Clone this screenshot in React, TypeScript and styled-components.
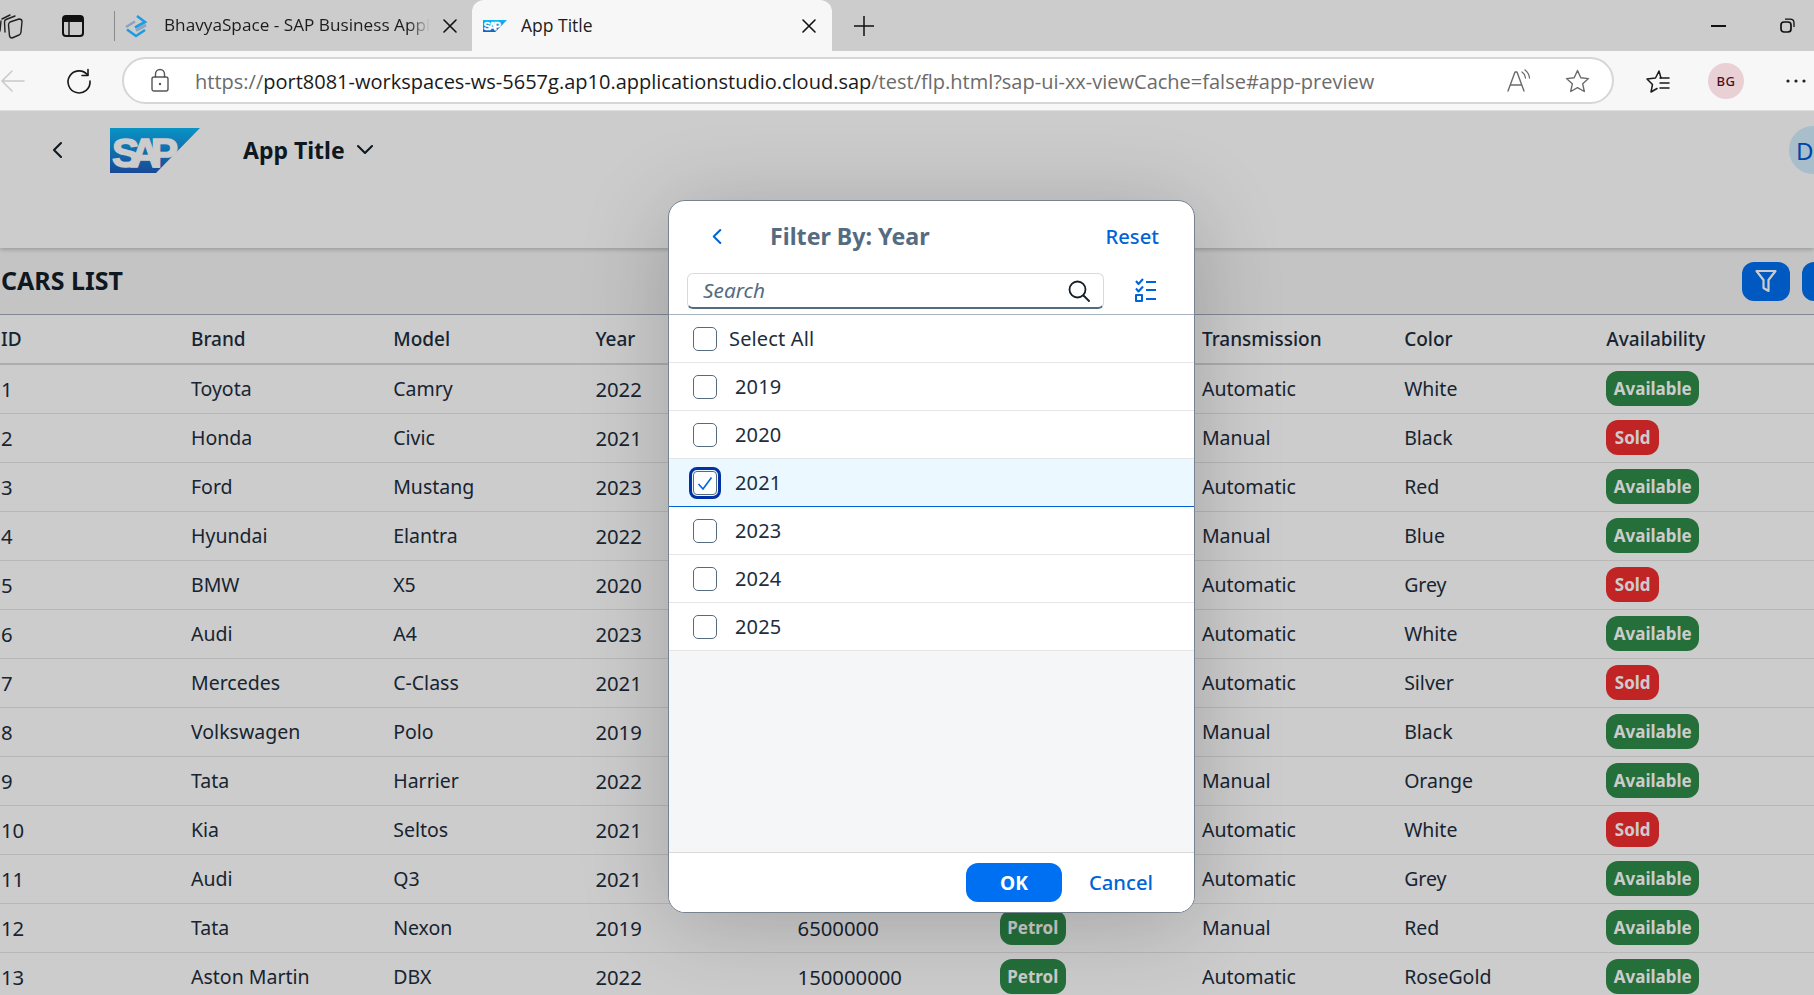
import React from "react";
import styled, { createGlobalStyle } from "styled-components";

const Global = createGlobalStyle`
  html, body { margin: 0; padding: 0; height: 100%; overflow: hidden; background: #fff; }
  body { font-family: "Noto Sans", "Open Sans", sans-serif; color: #1d2d3e; }
  #root { width: 1814px; height: 995px; overflow: hidden; }
  * { box-sizing: border-box; }
`;

const Strip = styled.div`
  height: 51px; background: #cccccc; display: flex; align-items: center; padding-right: 19px;
`;
const Slot = styled.span<{ $w: number; $ml?: number }>`
  display: flex; align-items: center; justify-content: center; flex: none;
  width: ${p => p.$w}px; margin-left: ${p => p.$ml ?? 0}px;
  svg { display: block; overflow: visible; }
`;
const Sep = styled.span`
  width: 1px; height: 30px; background: #8a8a8a; margin-left: 30px; flex: none;
`;
const TabLabel = styled.span`
  font-family: "Open Sans", sans-serif; font-size: 17.5px; line-height: 24px; margin-bottom: 2px; color: #1c1c1c; white-space: nowrap; overflow: hidden;
`;
const BackTabLabel = styled(TabLabel)`
  width: 266px; margin-left: 16px; flex: none; font-size: 17.2px;
  -webkit-mask-image: linear-gradient(90deg, #000 92%, transparent);
  mask-image: linear-gradient(90deg, #000 92%, transparent);
`;
const ActiveTab = styled.div`
  width: 360px; height: 51px; margin-left: 15px; flex: none; background: #f7f7f7;
  border-radius: 12px 12px 0 0; display: flex; align-items: center; padding: 0 16px 0 11px;
`;
const ActiveLabel = styled(TabLabel)`
  margin-left: 14px; flex: 1;
`;
const Spacer = styled.span`
  flex: 1;
`;

const AddressBar = styled.div`
  height: 60px; background: #f7f7f7; border-bottom: 1px solid #dedede; display: flex; align-items: center;
`;
const UrlPill = styled.div`
  width: 1492px; height: 47px; margin-left: 31px; flex: none; background: #fff; border: 2px solid #d6d6d6;
  border-radius: 24px; display: flex; align-items: center; padding: 0 22px 0 27px;
`;
const UrlText = styled.div`
  margin: 2px 0 0 26px; flex: 1; font-family: "Open Sans", sans-serif; font-size: 20px; white-space: nowrap; color: #6b6b6b; overflow: hidden;
`;
const UrlHost = styled.span`
  color: #1a1a1a;
`;
const Profile = styled.span`
  width: 36px; height: 36px; margin-left: 39px; flex: none; border-radius: 50%; background: #e8d0d4; color: #4a0d1c;
  display: flex; align-items: center; justify-content: center; font-size: 13px; font-weight: 500; letter-spacing: .5px;
`;

const Page = styled.div`
  position: relative; height: 884px; overflow: hidden; background: #fff;
`;
const ShellBar = styled.header`
  height: 137px; background: #fff; position: relative; box-shadow: 0 2px 4px rgba(0,0,0,.2);
  display: flex; align-items: flex-start; padding-top: 15px;
`;
const ShellRow = styled.div`
  height: 48px; width: 100%; display: flex; align-items: center; color: #1d2d3e;
`;
const AppTitle = styled.h1`
  margin: 0 0 0 43px; font-size: 23px; font-weight: 700; line-height: 1; color: #131e29; white-space: nowrap; flex: none; width: 104px;
`;
const Avatar = styled.span`
  position: absolute; left: 1789px; top: 15px; width: 48px; height: 48px; border-radius: 50%; background: #d2eefe; color: #0057d2;
  display: flex; align-items: center; padding-left: 7px; font-size: 24px;
`;
const Toolbar = styled.div`
  height: 67px; background: #f5f6f7; border-bottom: 1px solid #a0acb8; display: flex; align-items: center; padding-left: 1px;
`;
const TableTitle = styled.h2`
  margin: 0 0 2px; font-size: 25px; font-weight: 700; color: #131e29; flex: none;
`;
const ToolButton = styled.button<{ $ml?: number; $cut?: boolean }>`
  width: 48px; height: 39px; margin-left: ${p => p.$ml ?? 0}px; margin-right: ${p => (p.$cut ? -36 : 0)}px; flex: none; border: 0; padding: 0; border-radius: 12px; background: #0070f2;
  display: flex; align-items: center; justify-content: center;
`;
const Row = styled.div<{ $head?: boolean }>`
  display: grid; grid-template-columns: 190px repeat(8, 202.2px) 1fr; padding-left: 1px; align-items: center; background: #fff;
  height: ${p => (p.$head ? 49.5 : 49)}px;
  font-size: ${p => (p.$head ? 19 : 19.5)}px; color: #1d2d3e; white-space: nowrap;
  font-weight: ${p => (p.$head ? 500 : 400)};
  border-bottom: ${p => (p.$head ? "2px solid #d9d9d9" : "1px solid #e5e5e5")};
`;
const Cell = styled.div``;
const NumCell = styled.div`
  font-size: 20.3px;
`;
const Pill = styled.span<{ $tone: "good" | "bad" }>`
  display: inline-flex; align-items: center; height: 35px; padding: 0 ${p => (p.$tone === "good" ? 7.5 : 8.5)}px; border-radius: 12px; color: #fff;
  font-size: 17px; font-weight: 700; background: ${p => (p.$tone === "good" ? "#2e8b49" : "#f22e2e")};
`;

const Overlay = styled.div`
  position: absolute; inset: 0; background: rgba(0,0,0,.2); padding: 89px 0 0 668px;
`;
const Dialog = styled.section`
  width: 527px; height: 713px; background: #fff; border: 1px solid #77838f; border-radius: 17px; overflow: hidden;
  box-shadow: 0 10px 90px rgba(0,0,0,.2); display: flex; flex-direction: column;
`;
const DialogHead = styled.div`
  height: 66px; flex: none; display: flex; align-items: center; padding: 4px 35px 0 42px;
`;
const DialogTitle = styled.h3`
  margin: 0 0 0 47px; font-size: 23.2px; font-weight: 700; color: #556b82; flex: 1; white-space: nowrap;
`;
const LinkButton = styled.button`
  border: 0; background: none; padding: 0; font: inherit; font-size: 20.2px; font-weight: 500; color: #0064d9;
`;
const SubHead = styled.div`
  height: 48px; flex: none; display: flex; align-items: flex-start; padding: 6px 0 0 18px; border-bottom: 1px solid #a8b2bd;
`;
const SearchBox = styled.div`
  width: 417px; height: 36px; flex: none; background: #fff; border: 1px solid #d4dae0; border-bottom: 2px solid #556b82; border-radius: 6px;
  display: flex; align-items: center; justify-content: space-between; padding: 0 13px 0 15px;
`;
const Placeholder = styled.span`
  font-size: 20.8px; line-height: 28px; margin-bottom: 2px; font-style: italic; color: #556b82;
`;
const ListArea = styled.div`
  flex: 1; background: #f5f6f7; display: flex; flex-direction: column;
`;
const Option = styled.div<{ $selected?: boolean; $gap: number; $h: number }>`
  height: ${p => p.$h}px; flex: none; display: flex; align-items: center; padding-left: 24px; gap: ${p => p.$gap}px;
  font-size: 20px; letter-spacing: .15px; color: #1d2d3e;
  background: ${p => (p.$selected ? "#ebf8ff" : "#fff")};
  border-bottom: 1px solid ${p => (p.$selected ? "#0064d9" : "#e5e5e5")};
`;
const Check = styled.span<{ $focus?: boolean }>`
  width: 24px; height: 24px; flex: none; margin-top: 1px; background: #fff; border: 1px solid #556b82; border-radius: 5px;
  display: flex; align-items: center; justify-content: center;
  ${p => p.$focus ? "outline: 3px solid #0032a5; outline-offset: 1.5px; border-radius: 4px;" : ""}
`;
const DialogFoot = styled.div`
  height: 60px; flex: none; background: #fff; border-top: 1px solid #d9d9d9; display: flex; align-items: center; padding: 0 40px 0 297px;
`;
const OkButton = styled.button`
  width: 96px; height: 39px; flex: none; border: 0; padding: 0; border-radius: 12px; background: #0070f2; color: #fff;
  font: inherit; font-size: 19.2px; font-weight: 700;
`;
const CancelButton = styled(LinkButton)`
  margin: 0 0 2px 27px;
`;

const line = { fill: "none", stroke: "currentColor", strokeLinecap: "round", strokeLinejoin: "round" } as const;

const SapMark = ({ w, h }: { w: number; h: number }) => (
  <svg width={w} height={h} viewBox="0 0 90 45">
    <defs>
      <linearGradient id={`sapg${w}`} x1="0" y1="0" x2="0" y2="1">
        <stop offset="0" stopColor="#0cb8f7" />
        <stop offset="1" stopColor="#1f5cbd" />
      </linearGradient>
    </defs>
    <polygon points="0,0 90,0 46,45 0,45" fill={`url(#sapg${w})`} />
    <text x="2" y="39" fontFamily="Liberation Sans, sans-serif" fontWeight="700" fontSize="41" fill="#fff" stroke="#fff" strokeWidth="1.5" textLength="66" lengthAdjust="spacing">SAP</text>
  </svg>
);

const Chevron = ({ dir, color, size = 16 }: { dir: "l" | "d"; color: string; size?: number }) => (
  <svg width={size} height={size} viewBox="0 0 16 16" style={{ color }}>
    {dir === "l" ? <path d="M11 1 L4 8 L11 15" {...line} strokeWidth="2.1" /> : <path d="M1 4 L8 11 L15 4" {...line} strokeWidth="2.1" />}
  </svg>
);

const cars = [
  ["1", "Toyota", "Camry", "2022", "2500000", "Petrol", "Automatic", "White", "Available"],
  ["2", "Honda", "Civic", "2021", "2100000", "Petrol", "Manual", "Black", "Sold"],
  ["3", "Ford", "Mustang", "2023", "7500000", "Petrol", "Automatic", "Red", "Available"],
  ["4", "Hyundai", "Elantra", "2022", "2000000", "Petrol", "Manual", "Blue", "Available"],
  ["5", "BMW", "X5", "2020", "9500000", "Diesel", "Automatic", "Grey", "Sold"],
  ["6", "Audi", "A4", "2023", "4500000", "Petrol", "Automatic", "White", "Available"],
  ["7", "Mercedes", "C-Class", "2021", "5500000", "Petrol", "Automatic", "Silver", "Sold"],
  ["8", "Volkswagen", "Polo", "2019", "900000", "Petrol", "Manual", "Black", "Available"],
  ["9", "Tata", "Harrier", "2022", "2200000", "Diesel", "Manual", "Orange", "Available"],
  ["10", "Kia", "Seltos", "2021", "1800000", "Petrol", "Automatic", "White", "Sold"],
  ["11", "Audi", "Q3", "2021", "4200000", "Petrol", "Automatic", "Grey", "Available"],
  ["12", "Tata", "Nexon", "2019", "6500000", "Petrol", "Manual", "Red", "Available"],
  ["13", "Aston Martin", "DBX", "2022", "150000000", "Petrol", "Automatic", "RoseGold", "Available"],
];
const heads = ["ID", "Brand", "Model", "Year", "Price", "Fuel", "Transmission", "Color", "Availability"];

export default function App() {
  return (
    <>
      <Global />
      <Strip>
        <Slot $w={22}>
          <svg width="22" height="24" viewBox="0 0 22 24" style={{ color: "#222" }}>
            <path d="M10 8 L19 5 Q22 5 22 7.5 L21 18 Q21 20 19 21 L12 24 Q10 24 9.5 22 L8.5 11 Q8.5 9 10 8Z" {...line} strokeWidth="1.4" />
            <path d="M5 18 L4.5 8 Q4.5 6 6 5.5 L15 2" {...line} strokeWidth="1.4" />
            <path d="M0 17 L1 7 M2 5 L10 1" {...line} strokeWidth="1.4" />
          </svg>
        </Slot>
        <Slot $w={22} $ml={40}>
          <svg width="22" height="22" viewBox="0 0 22 22">
            <path d="M4 1 H18 Q21 1 21 4 V7 H1 V4 Q1 1 4 1Z" fill="#111" />
            <rect x="1" y="1" width="20" height="20" rx="3" fill="none" stroke="#111" strokeWidth="2" />
            <path d="M7 7 V21" stroke="#111" strokeWidth="1.4" />
          </svg>
        </Slot>
        <Sep />
        <Slot $w={24} $ml={9}>
          <svg width="24" height="24" viewBox="0 0 24 24" fill="none" strokeWidth="2.6">
            <path d="M2 13 L11 7.5" stroke="#8ba3bf" />
            <path d="M12 16.5 L22 11" stroke="#8ba3bf" />
            <path d="M13 2 L21 8 L11 13.5" stroke="#1d9ddf" />
            <path d="M3 15.5 L12 22 L21 16" stroke="#1d9ddf" />
          </svg>
        </Slot>
        <BackTabLabel>BhavyaSpace - SAP Business Application Studio</BackTabLabel>
        <Slot $w={14} $ml={13}>
          <svg width="14" height="14" viewBox="0 0 14 14"><path d="M1 1 L13 13 M13 1 L1 13" {...line} stroke="#111" strokeWidth="1.6" /></svg>
        </Slot>
        <ActiveTab>
          <Slot $w={24}><SapMark w={24} h={12} /></Slot>
          <ActiveLabel>App Title</ActiveLabel>
          <Slot $w={14}>
            <svg width="14" height="14" viewBox="0 0 14 14"><path d="M1 1 L13 13 M13 1 L1 13" {...line} stroke="#111" strokeWidth="1.6" /></svg>
          </Slot>
        </ActiveTab>
        <Slot $w={20} $ml={22}>
          <svg width="20" height="20" viewBox="0 0 20 20"><path d="M10 0 V20 M0 10 H20" stroke="#111" strokeWidth="1.5" /></svg>
        </Slot>
        <Spacer />
        <Slot $w={15}>
          <svg width="15" height="2" viewBox="0 0 15 2"><rect width="15" height="2" fill="#111" /></svg>
        </Slot>
        <Slot $w={15} $ml={54}>
          <svg width="15" height="15" viewBox="0 0 15 15">
            <rect x="1" y="4" width="10" height="10" rx="3" fill="none" stroke="#111" strokeWidth="1.7" />
            <path d="M5 1.2 H10 Q14 1.2 14 5 V9" fill="none" stroke="#111" strokeWidth="1.3" />
          </svg>
        </Slot>
      </Strip>

      <AddressBar>
        <Slot $w={24} $ml={1}>
          <svg width="24" height="22" viewBox="0 0 24 22"><path d="M23 11 H1 M11 1 L1 11 L11 21" {...line} stroke="#c9c9c9" strokeWidth="1.5" /></svg>
        </Slot>
        <Slot $w={24} $ml={42}>
          <svg width="24" height="24" viewBox="0 0 24 24" style={{ marginTop: -2 }}>
            <path d="M21 1.5 V7.5 H15" {...line} stroke="#1a1a1a" strokeWidth="1.6" />
            <path d="M20.6 7 A11 11 0 1 0 23 13" {...line} stroke="#1a1a1a" strokeWidth="1.6" />
          </svg>
        </Slot>
        <UrlPill>
          <Slot $w={18}>
            <svg width="18" height="23" viewBox="0 0 18 23" style={{ color: "#555" }}>
              <rect x="1" y="8" width="16" height="14" rx="2" {...line} strokeWidth="1.4" />
              <path d="M4.5 8 V5 A4.5 4.5 0 0 1 13.5 5 V8" {...line} strokeWidth="1.4" />
              <circle cx="9" cy="15" r="1.2" fill="#555" />
            </svg>
          </Slot>
          <UrlText>https://<UrlHost>port8081-workspaces-ws-5657g.ap10.applicationstudio.cloud.sap</UrlHost>/test/flp.html?sap-ui-xx-viewCache=false#app-preview</UrlText>
          <Slot $w={23}>
            <svg width="24" height="24" viewBox="0 0 24 24" style={{ color: "#6b6b6b" }}>
              <path d="M1 22 L8 3 L10 3 L17 22 M3.5 16 H14.5" {...line} strokeWidth="1.4" />
              <path d="M15 3 Q18 5 18.5 9 M18 1 Q22 4 22.5 9" {...line} strokeWidth="1.3" />
            </svg>
          </Slot>
          <Slot $w={25} $ml={35}>
            <svg width="25" height="24" viewBox="0 0 25 24" style={{ color: "#6b6b6b" }}>
              <path d="M12.5 1.5 L15.8 8.8 L23.5 9.6 L17.7 14.8 L19.3 22.5 L12.5 18.6 L5.7 22.5 L7.3 14.8 L1.5 9.6 L9.2 8.8 Z" {...line} strokeWidth="1.4" />
            </svg>
          </Slot>
        </UrlPill>
        <Slot $w={24} $ml={31}>
          <svg width="25" height="24" viewBox="0 0 25 24" style={{ color: "#1a1a1a" }}>
            <path d="M16 9 L14 2 L10.5 9 L2 10 L7.5 15.5 L6 23 L12 19.5" {...line} strokeWidth="1.5" />
            <path d="M15 9 H24 M15 14 H24 M15 19 H24" {...line} strokeWidth="1.5" />
          </svg>
        </Slot>
        <Profile>BG</Profile>
        <Slot $w={20} $ml={42}>
          <svg width="20" height="4" viewBox="0 0 20 4"><circle cx="2" cy="2" r="1.6" fill="#222" /><circle cx="10" cy="2" r="1.6" fill="#222" /><circle cx="18" cy="2" r="1.6" fill="#222" /></svg>
        </Slot>
      </AddressBar>

      <Page>
        <ShellBar>
          <ShellRow>
            <Slot $w={12} $ml={52}><Chevron dir="l" color="#131e29" /></Slot>
            <Slot $w={90} $ml={46}><SapMark w={90} h={45} /></Slot>
            <AppTitle>App Title</AppTitle>
            <Slot $w={16} $ml={10}><Chevron dir="d" color="#131e29" /></Slot>
          </ShellRow>
          <Avatar>D</Avatar>
        </ShellBar>
        <Toolbar>
          <TableTitle>CARS LIST</TableTitle>
          <Spacer />
          <ToolButton aria-label="Filter">
            <svg width="22" height="24" viewBox="0 0 22 24"><path d="M1.5 2 H20.5 L13.5 11 V22 L8.5 19 V11 Z" fill="none" stroke="#fff" strokeWidth="2.2" strokeLinejoin="round" /></svg>
          </ToolButton>
          <ToolButton $ml={12} $cut aria-label="Sort" />
        </Toolbar>
        <Row $head>
          {heads.map(h => <Cell key={h}>{h}</Cell>)}
        </Row>
        {cars.map(c => (
          <Row key={c[0]}>
            <NumCell>{c[0]}</NumCell>
            <Cell>{c[1]}</Cell>
            <Cell>{c[2]}</Cell>
            <NumCell>{c[3]}</NumCell>
            <NumCell>{c[4]}</NumCell>
            <Cell><Pill $tone="good">{c[5]}</Pill></Cell>
            <Cell>{c[6]}</Cell>
            <Cell>{c[7]}</Cell>
            <Cell><Pill $tone={c[8] === "Sold" ? "bad" : "good"}>{c[8]}</Pill></Cell>
          </Row>
        ))}
        <Overlay>
          <Dialog>
            <DialogHead>
              <Slot $w={12}><Chevron dir="l" color="#0064d9" size={15} /></Slot>
              <DialogTitle>Filter By: Year</DialogTitle>
              <LinkButton>Reset</LinkButton>
            </DialogHead>
            <SubHead>
              <SearchBox>
                <Placeholder>Search</Placeholder>
                <svg width="22" height="22" viewBox="0 0 22 22" style={{ color: "#131e29" }}>
                  <circle cx="9.5" cy="9.5" r="8" {...line} strokeWidth="1.8" />
                  <path d="M15.5 15.5 L21 21" {...line} strokeWidth="1.8" />
                </svg>
              </SearchBox>
              <Slot $w={22} $ml={31}>
                <svg width="22" height="24" viewBox="0 0 22 24" style={{ marginTop: 5, color: "#0064d9" }}>
                  <path d="M1 3 L3.5 6 L8 1 M1 10.5 L3.5 13.5 L8 8.5" {...line} strokeLinecap="butt" strokeWidth="2" />
                  <rect x="1" y="17" width="6" height="6" {...line} strokeWidth="2" />
                  <path d="M11 4 H21 M11 12 H21 M11 21 H21" {...line} strokeLinecap="butt" strokeWidth="2" />
                </svg>
              </Slot>
            </SubHead>
            <ListArea>
              <Option $gap={12} $h={47.5}><Check />Select All</Option>
              {["2019", "2020", "2021", "2023", "2024", "2025"].map(y => (
                <Option key={y} $gap={18} $h={48} $selected={y === "2021"}>
                  <Check $focus={y === "2021"}>
                    {y === "2021" && (
                      <svg width="16" height="16" viewBox="0 0 16 16"><path d="M1.5 9 L6 14 L14.5 2.5" fill="none" stroke="#0064d9" strokeWidth="1.6" /></svg>
                    )}
                  </Check>
                  {y}
                </Option>
              ))}
            </ListArea>
            <DialogFoot>
              <OkButton>OK</OkButton>
              <CancelButton>Cancel</CancelButton>
            </DialogFoot>
          </Dialog>
        </Overlay>
      </Page>
    </>
  );
}
